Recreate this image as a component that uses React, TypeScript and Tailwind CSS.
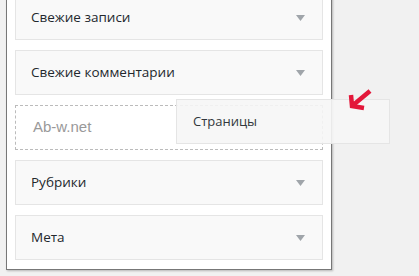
import React from "react";

const Tri = () => (
  <svg width="9" height="6" viewBox="0 0 9 6" className="shrink-0">
    <path d="M0 0 H9 L4.5 6 Z" fill="#a0a5aa" />
  </svg>
);

const Widget = ({ title }: { title: string }) => (
  <div className="h-[45px] flex items-center justify-between border border-[#e5e5e5] bg-[#f9f9f9] pl-[15px] pr-[17px]">
    <span className="text-[13.5px] text-[#23282d]" style={{ fontFamily: '"Open Sans", sans-serif' }}>{title}</span>
    <Tri />
  </div>
);

export default function App() {
  return (
    <div className="relative w-[419px] h-[276px] overflow-hidden bg-[#f1f1f1]">
      <div className="ml-[6px] w-[326px] -mt-[15px] bg-white border-x border-b border-[#777] shadow-[1px_1px_2px_rgba(0,0,0,0.25)] px-[8px] pt-[10px] pb-[9px] flex flex-col gap-[10px]">
        <Widget title="Свежие записи" />
        <Widget title="Свежие комментарии" />
        <div className="h-[45px] border border-dashed border-[#bbb] flex items-center pl-[17px]">
          <span className="text-[15px] text-[#999]" style={{ fontFamily: '"Liberation Sans", Arial, sans-serif' }}>Ab-w.net</span>
        </div>
        <Widget title="Рубрики" />
        <Widget title="Мета" />
      </div>
      <div className="absolute left-[176px] top-[99px] w-[214px] h-[45px] bg-[#f6f6f6]/90 border border-[#e5e5e5] flex items-center pl-[16px]">
        <span className="text-[13px] text-[#32373c]" style={{ fontFamily: '"Open Sans", sans-serif' }}>Страницы</span>
      </div>
      <svg className="absolute left-[345px] top-[87px]" width="32" height="26" viewBox="0 0 32 26">
        <path d="M25 4 L7 19 M6 8 L7 19 L19 21" stroke="#e3173a" strokeWidth="4.5" fill="none" strokeLinecap="butt" strokeLinejoin="miter" />
      </svg>
    </div>
  );
}
